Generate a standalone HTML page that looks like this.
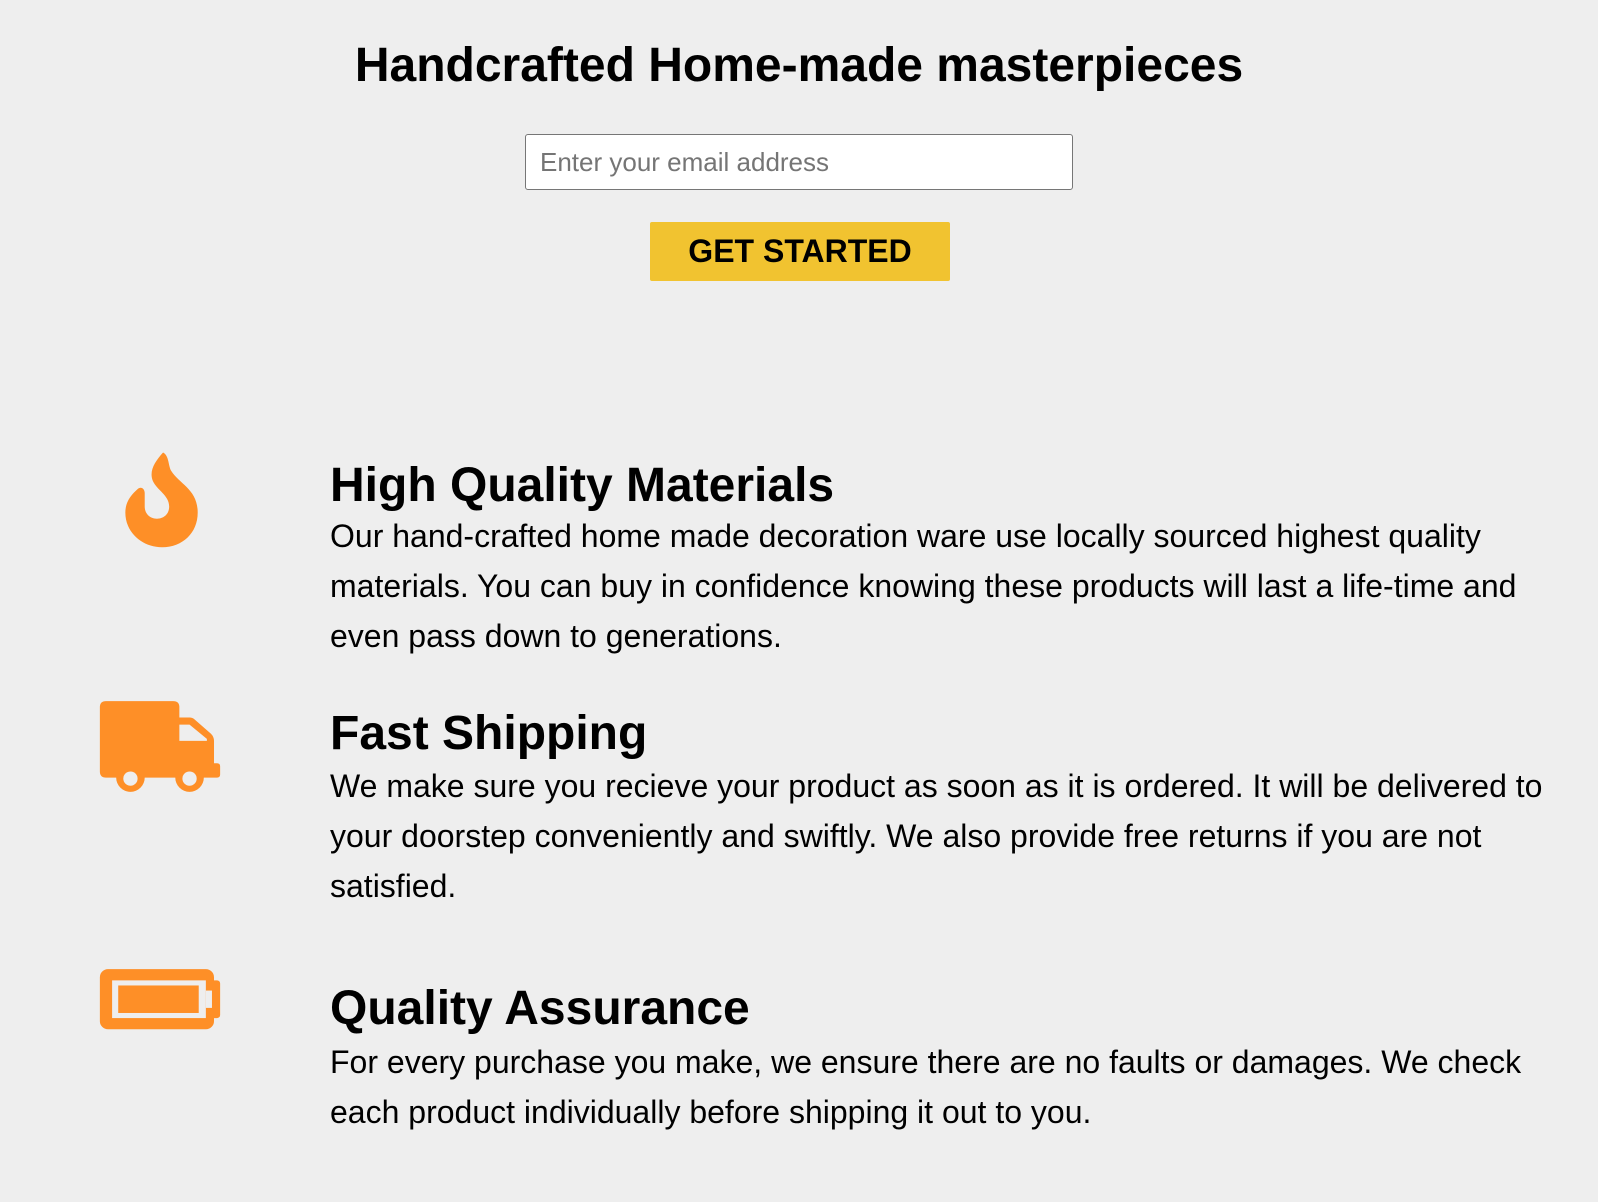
<!DOCTYPE html>
<html><head><meta charset="utf-8"><style>
html,body{margin:0;padding:0;background:#eeeeee;}
body{width:1598px;height:1202px;position:relative;overflow:hidden;font-family:"Liberation Sans",Arial,sans-serif;color:#000;}
h1{position:absolute;left:0;width:1598px;top:36px;margin:0;text-align:center;font-size:48px;line-height:60px;font-weight:bold;}
.inp{position:absolute;left:525px;top:134px;width:548px;height:56px;box-sizing:border-box;border:1.5px solid #767676;border-radius:3px;background:#fff;font-size:26px;color:#757575;line-height:54px;padding-left:14px;}
.btn{position:absolute;left:650px;top:222px;width:300px;height:59px;background:#f1c330;border-radius:2px;text-align:center;font-weight:bold;font-size:32px;line-height:59px;}
h2{position:absolute;left:330px;margin:0;font-size:48px;line-height:48px;font-weight:bold;}
p{position:absolute;left:330px;margin:0;font-size:32px;line-height:50px;width:1230px;}
svg{position:absolute;left:0;top:0;}
</style></head><body>
<h1>Handcrafted Home-made masterpieces</h1>
<div class="inp">Enter your email address</div>
<div class="btn">GET STARTED</div>

<h2 style="top:462px">High Quality Materials</h2>
<p style="top:511px">Our hand-crafted home made decoration ware use locally sourced highest quality materials. You can buy in confidence knowing these products will last a life-time and even pass down to generations.</p>

<h2 style="top:710px">Fast Shipping</h2>
<p style="top:761px">We make sure you recieve your product as soon as it is ordered. It will be delivered to your doorstep conveniently and swiftly. We also provide free returns if you are not satisfied.</p>

<h2 style="top:985px">Quality Assurance</h2>
<p style="top:1037px">For every purchase you make, we ensure there are no faults or damages. We check each product individually before shipping it out to you.</p>

<svg width="300" height="1202" viewBox="0 0 300 1202">
<g transform="scale(1.0191)">
<path fill="#fe8f27" d="M160,444 C152,453 146,462 150,472 C154,481 166,486 166,497 C166,505 160,509 154,509 C147,509 142,504 142,497 L142,484 C142,479 138,477 135,480 C127,487 123,494 123,503 C123,523 140,537 159,537 C179,537 194,523 194,503 C194,480 176,475 168,462 C165,457 166,447 160,444 Z"/>
<path fill="#fe8f27" fill-rule="evenodd" d="M104,688 H170 Q176,688 176,694 V704 H186 Q189,704 191,706 L207,720 Q210,723 210,727 V749 H213 Q216,749 216,752 V760 Q216,763 213,763 H200 A14,14 0 0 1 172,763 H142 A14,14 0 0 1 114,763 H104 Q98,763 98,757 V694 Q98,688 104,688 Z M176,711 H186 L203,725 V727 H176 Z"/>
<circle cx="128" cy="764" r="7" fill="#eeeeee"/>
<circle cx="186" cy="764" r="7" fill="#eeeeee"/>
<rect x="98" y="951" width="112" height="59" rx="8" fill="#fe8f27"/>
<rect x="206" y="962" width="10" height="37" rx="3" fill="#fe8f27"/>
<rect x="110" y="962" width="92" height="37" fill="#eeeeee"/>
<rect x="202" y="972" width="6" height="17" fill="#eeeeee"/>
<rect x="116" y="967" width="79" height="27" fill="#fe8f27"/>
</g>
</svg>
</body></html>
